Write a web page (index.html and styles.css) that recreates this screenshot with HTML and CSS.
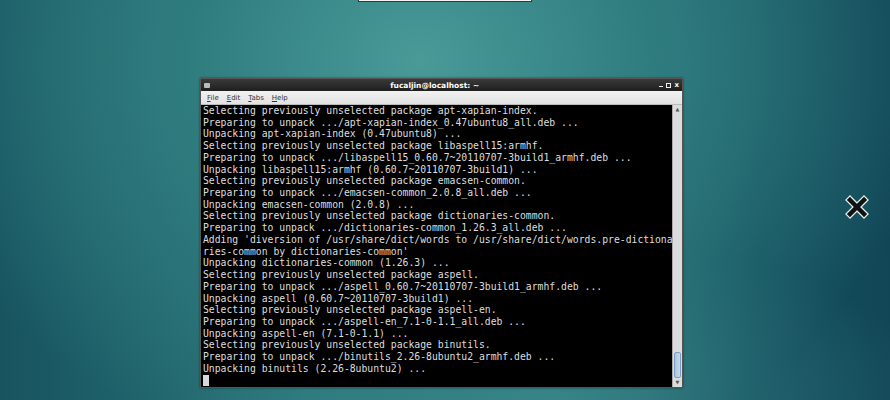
FILE: index.html
```html
<!DOCTYPE html>
<html lang="en">
<head>
    <meta charset="UTF-8">
    <meta name="viewport" content="width=device-width, initial-scale=1.0">
    <title>Desktop</title>
    <link rel="stylesheet" href="styles.css">
</head>
<body>
    <div class="desktop">
        <div class="topbox"></div>

        <div class="window">
            <div class="titlebar">
                <span class="winicon"></span>
                <span class="title">fucaljin@localhost: ~</span>
                <span class="winbtns">
                    <span class="btn-min"></span>
                    <span class="btn-max"></span>
                    <span class="btn-close">x</span>
                </span>
            </div>
            <div class="menubar">
                <span><u>F</u>ile</span>
                <span><u>E</u>dit</span>
                <span><u>T</u>abs</span>
                <span><u>H</u>elp</span>
            </div>
            <div class="termarea">
<pre class="term">Selecting previously unselected package apt-xapian-index.
Preparing to unpack .../apt-xapian-index_0.47ubuntu8_all.deb ...
Unpacking apt-xapian-index (0.47ubuntu8) ...
Selecting previously unselected package libaspell15:armhf.
Preparing to unpack .../libaspell15_0.60.7~20110707-3build1_armhf.deb ...
Unpacking libaspell15:armhf (0.60.7~20110707-3build1) ...
Selecting previously unselected package emacsen-common.
Preparing to unpack .../emacsen-common_2.0.8_all.deb ...
Unpacking emacsen-common (2.0.8) ...
Selecting previously unselected package dictionaries-common.
Preparing to unpack .../dictionaries-common_1.26.3_all.deb ...
Adding 'diversion of /usr/share/dict/words to /usr/share/dict/words.pre-dictiona
ries-common by dictionaries-common'
Unpacking dictionaries-common (1.26.3) ...
Selecting previously unselected package aspell.
Preparing to unpack .../aspell_0.60.7~20110707-3build1_armhf.deb ...
Unpacking aspell (0.60.7~20110707-3build1) ...
Selecting previously unselected package aspell-en.
Preparing to unpack .../aspell-en_7.1-0-1.1_all.deb ...
Unpacking aspell-en (7.1-0-1.1) ...
Selecting previously unselected package binutils.
Preparing to unpack .../binutils_2.26-8ubuntu2_armhf.deb ...
Unpacking binutils (2.26-8ubuntu2) ...
<span class="cursor"> </span></pre>
                <div class="scrollbar">
                    <span class="arrow">&#9650;</span>
                    <span class="track"></span>
                    <span class="thumb"></span>
                    <span class="arrow">&#9660;</span>
                </div>
            </div>
        </div>

        <svg class="xicon" width="24" height="24" viewBox="0 0 24 24">
            <path d="M5 5 L19 19 M19 5 L5 19" stroke="#e4f0ef" stroke-width="7" stroke-linecap="square"/>
            <path d="M5 5 L19 19 M19 5 L5 19" stroke="#111" stroke-width="4.5" stroke-linecap="square"/>
        </svg>
    </div>
</body>
</html>
```
FILE: styles.css
```css
body{
  margin:0;
}
.desktop{
  position:relative;
  width:890px;
  height:400px;
  overflow:hidden;
  background:
    radial-gradient(ellipse 520px 420px at 420px 60px, #4a9a98 0%, #2f7c7f 45%, rgba(20,80,90,0) 100%),
    radial-gradient(ellipse 380px 160px at 560px 400px, rgba(80,160,160,.45), rgba(80,160,160,0)),
    linear-gradient(90deg, #175460 0%, #2a7478 35%, #2b7578 60%, #14505e 85%, #114657 100%);
  font-family:"DejaVu Sans", sans-serif;
}
.topbox{
  position:absolute;
  left:358px;
  top:-4px;
  width:172px;
  height:4px;
  background:#f4f4f4;
  border:1px solid #2a3a3a;
}
.window{
  position:absolute;
  left:200px;
  top:78px;
  width:481px;
  border:1px solid #555;
  background:#d9d9d9;
  box-shadow:0 0 2px rgba(0,0,0,.5);
}
.titlebar{
  display:flex;
  align-items:center;
  height:12px;
  padding:0 3px;
  background:linear-gradient(#3a3a3a, #1e1e1e);
  color:#fff;
}
.winicon{
  width:6px;
  height:5px;
  background:#bbb;
  border-radius:1px;
}
.title{
  flex:1;
  text-align:center;
  font-size:7.5px;
  font-weight:bold;
}
.winbtns{
  display:flex;
  align-items:center;
  gap:3px;
  font-size:7px;
  font-weight:bold;
}
.btn-min{
  width:4px;
  height:1px;
  margin-top:3px;
  background:#eee;
}
.btn-max{
  width:3px;
  height:3px;
  border:1px solid #eee;
}
.btn-close{
  line-height:7px;
}
.menubar{
  display:flex;
  gap:8px;
  height:13px;
  align-items:center;
  padding:0 6px;
  background:linear-gradient(#f2f2f2, #e2e2e2);
  border-bottom:1px solid #bbb;
  font-size:7px;
  color:#333;
}
.termarea{
  display:flex;
  background:#000;
  height:282px;
}
.term{
  flex:1;
  margin:0;
  padding:0 0 0 2px;
  font-family:"DejaVu Sans Mono", monospace;
  font-size:9.75px;
  line-height:11.72px;
  color:#dedede;
  white-space:pre;
  overflow:hidden;
}
.cursor{
  display:inline-block;
  width:6px;
  height:11px;
  vertical-align:top;
  background:#d8d8d8;
}
.scrollbar{
  display:flex;
  flex-direction:column;
  width:9px;
  background:#dcdcdc;
  border-left:1px solid #aaa;
}
.scrollbar .arrow{
  height:9px;
  font-size:5px;
  line-height:9px;
  text-align:center;
  color:#555;
}
.scrollbar .track{
  flex:1;
}
.scrollbar .thumb{
  height:24px;
  margin:0 1px;
  background:linear-gradient(90deg, #a9c3de, #c8daec);
  border:1px solid #7f9fc2;
  border-radius:2px;
}
.xicon{
  position:absolute;
  left:845px;
  top:195px;
}
```
